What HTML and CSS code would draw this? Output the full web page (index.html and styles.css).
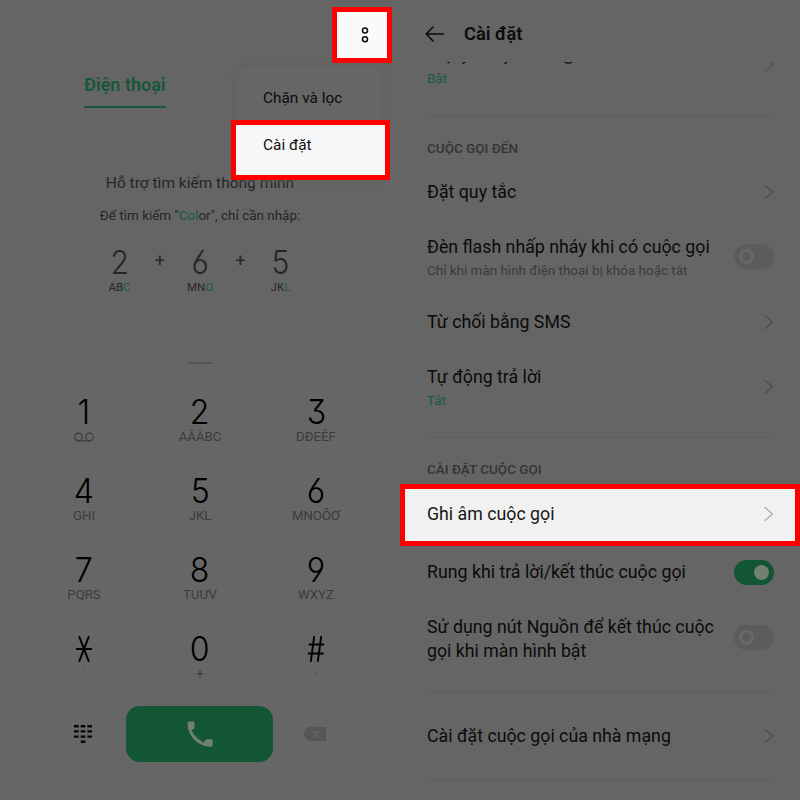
FILE: index.html
```
<!DOCTYPE html>
<html lang="vi">
<head>
<meta charset="utf-8">
<title>Cài đặt cuộc gọi</title>
<link rel="stylesheet" href="styles.css">
</head>
<body>
<main class="screens">
  <section class="phone">
    <header class="tabs"><span class="tab">Điện thoại</span></header>
    <div class="hint">
      <p class="hint-title">Hỗ trợ tìm kiếm thông minh</p>
      <p class="hint-text">Để tìm kiếm "<b>Col</b>or", chỉ cần nhập:</p>
      <div class="combo">
        <div class="combo-key"><span class="num">2</span><span class="abc">AB<b>C</b></span></div>
        <span class="plus">+</span>
        <div class="combo-key"><span class="num">6</span><span class="abc">MN<b>O</b></span></div>
        <span class="plus">+</span>
        <div class="combo-key"><span class="num">5</span><span class="abc">JK<b>L</b></span></div>
      </div>
    </div>
    <div class="dialer">
      <span class="grip"></span>
      <div class="keys">
        <div class="key"><span class="num">1</span><span class="sub"><svg class="voicemail" viewBox="0 0 20 10"><circle cx="4.5" cy="5" r="3.8"/><circle cx="15.5" cy="5" r="3.8"/><path d="M4.5 8.8h11"/></svg></span></div>
        <div class="key"><span class="num">2</span><span class="sub">AĂÂBC</span></div>
        <div class="key"><span class="num">3</span><span class="sub">DĐEÊF</span></div>
        <div class="key"><span class="num">4</span><span class="sub">GHI</span></div>
        <div class="key"><span class="num">5</span><span class="sub">JKL</span></div>
        <div class="key"><span class="num">6</span><span class="sub">MNOÔƠ</span></div>
        <div class="key"><span class="num">7</span><span class="sub">PQRS</span></div>
        <div class="key"><span class="num">8</span><span class="sub">TUƯV</span></div>
        <div class="key"><span class="num">9</span><span class="sub">WXYZ</span></div>
        <div class="key"><span class="num"><svg class="sign" viewBox="0 0 18 26"><path d="M4 1l10 24M14 1L4 25M1 13h16"/></svg></span><span class="sub tiny">'</span></div>
        <div class="key"><span class="num">0</span><span class="sub">+</span></div>
        <div class="key"><span class="num"><svg class="sign" viewBox="0 0 18 26"><path d="M7 1L3.5 25M14.5 1L11 25M2 8.5h15.5M1 17.5h15.5"/></svg></span><span class="sub tiny">;</span></div>
      </div>
      <div class="actions">
        <svg class="pad" viewBox="0 0 20 20"><path d="M1 2.2h4.6M7.7 2.2h4.6M14.4 2.2H19M1 7.4h4.6M7.7 7.4h4.6M14.4 7.4H19M1 12.6h4.6M7.7 12.6h4.6M14.4 12.6H19M7.7 17.8h4.6"/></svg>
        <div class="call"><svg viewBox="0 0 26 26"><path d="M.5 2Q.5.5 2 .5h4Q7.500.5 7.500 2v4.500q0 1.500-1.500 2L4.500 9C7 14.500 11.500 19 17 21.500l1-2q.6-1.200 2-1.200h4q1.700 0 1.700 1.600v4Q25.700 25.700 24 25.700C11 25.700.5 15 .5 2Z"/></svg></div>
        <svg class="erase" viewBox="0 0 24 16"><path class="shape" d="M6 1h17v14H6Q1 12.500 1 8t5-7Z"/><path class="cross" d="M10.500 5.300l5 5.400M15.500 5.300l-5 5.400"/></svg>
      </div>
    </div>
    <div class="more"><svg viewBox="0 0 8 18"><circle cx="4" cy="4.500" r="2.500"/><circle cx="4" cy="13.300" r="2.500"/></svg></div>
    <nav class="menu">
      <div class="menu-item">Chặn và lọc</div>
      <div class="menu-item picked">Cài đặt</div>
    </nav>
  </section>

  <section class="settings">
    <header class="bar">
      <svg class="back" viewBox="0 0 20 16"><path d="M8 1L1.200 8 8 15M1.200 8H18.500"/></svg>
      <h1>Cài đặt</h1>
    </header>
    <div class="row cut">
      <div class="label"><div class="peek"><svg viewBox="0 0 160 3"><path d="M21 .5h1M36 1.500l2-1.500M78 1.500l2-1.500M138 .2q3.500 2 6.500 0"/></svg></div><span class="state">Bật</span></div>
      <svg class="chev" viewBox="0 0 10 16"><path d="M8.500 8L1 14.500M6.500 6L8.500 8"/></svg>
    </div>
    <hr>
    <h2>CUỘC GỌI ĐẾN</h2>
    <div class="row rule"><div class="label">Đặt quy tắc</div><svg class="chev" viewBox="0 0 10 16"><path d="M1 1.500L8.500 8 1 14.500"/></svg></div>
    <div class="row flash"><div class="label">Đèn flash nhấp nháy khi có cuộc gọi<small>Chỉ khi màn hình điện thoại bị khóa hoặc tắt</small></div><span class="switch"></span></div>
    <div class="row sms"><div class="label">Từ chối bằng SMS</div><svg class="chev" viewBox="0 0 10 16"><path d="M1 1.500L8.500 8 1 14.500"/></svg></div>
    <div class="row auto"><div class="label">Tự động trả lời<span class="state">Tắt</span></div><svg class="chev" viewBox="0 0 10 16"><path d="M1 1.500L8.500 8 1 14.500"/></svg></div>
    <hr>
    <h2 class="second">CÀI ĐẶT CUỘC GỌI</h2>
    <div class="row record"><div class="label">Ghi âm cuộc gọi</div><svg class="chev" viewBox="0 0 10 16"><path d="M1 1.500L8.500 8 1 14.500"/></svg></div>
    <div class="row vibrate"><div class="label">Rung khi trả lời/kết thúc cuộc gọi</div><span class="switch on"></span></div>
    <div class="row power"><div class="label">Sử dụng nút Nguồn để kết thúc cuộc<br>gọi khi màn hình bật</div><span class="switch"></span></div>
    <hr>
    <div class="row carrier"><div class="label">Cài đặt cuộc gọi của nhà mạng</div><svg class="chev" viewBox="0 0 10 16"><path d="M1 1.500L8.500 8 1 14.500"/></svg></div>
    <hr>
  </section>
</main>
</body>
</html>
```
FILE: styles.css
```
*, *::before { box-sizing: border-box; margin: 0; padding: 0; }
body { width: 800px; height: 800px; overflow: hidden; background: #656565; color: #0b0b0b; font-family: Roboto, "Noto Sans", sans-serif; }
svg { display: block; fill: none; stroke: currentColor; stroke-linecap: round; stroke-linejoin: round; }
b { font-weight: inherit; color: #185c41; }
.screens { display: flex; height: 800px; }
.phone { position: relative; width: 400px; height: 800px; display: flex; flex-direction: column; }
.settings { width: 400px; height: 800px; display: flex; flex-direction: column; overflow: hidden; }

.tabs { height: 109px; padding: 72px 0 0 84px; }
.tab { display: inline-block; height: 36px; border-bottom: 2px solid #17573a; color: #17573a; font-size: 18px; font-weight: 600; line-height: 26px; white-space: nowrap; }
.hint { height: 246px; padding-top: 62px; text-align: center; color: #262626; }
.hint-title { font-size: 15.500px; line-height: 24px; white-space: nowrap; }
.hint-text { margin-top: 9px; font-size: 13.450px; line-height: 24px; white-space: nowrap; }
.combo { display: flex; justify-content: center; margin-top: 18px; }
.combo-key { width: 60px; display: flex; flex-direction: column; align-items: center; }
.combo .num { font-size: 32px; line-height: 34px; transform: scaleX(.94); }
.combo .abc { font-size: 11.500px; line-height: 14px; }
.plus { width: 20.500px; font-size: 18px; line-height: 30px; }
.num { font-family: Inter, Roboto, sans-serif; font-weight: 300; font-feature-settings: "cv03", "cv04", "cv09"; }

.dialer { height: 445px; display: flex; flex-direction: column; align-items: center; background: #666; border-radius: 16px 16px 0 0; }
.grip { width: 25px; height: 2px; margin-top: 7px; background: #555; border-radius: 1px; }
.keys { display: grid; grid-template-columns: repeat(3, 116px); grid-auto-rows: 79px; margin-top: 29px; }
.key { display: flex; flex-direction: column; align-items: center; }
.key .num { height: 38px; font-size: 34.500px; line-height: 38px; color: #000; transform: scaleX(.93); }
.sub { height: 12px; font-size: 13.200px; line-height: 12px; color: #3b3b3b; }
.tiny { font-size: 8px; line-height: 6px; }
.voicemail { width: 20px; height: 12px; stroke-width: 1.200; }
.sign { width: 18px; height: 26px; margin-top: 6px; stroke-width: 2; }
.actions { display: flex; align-items: center; margin-top: -3px; }
.pad { width: 20px; height: 20px; margin-right: 33px; stroke-width: 2.400; stroke-linecap: butt; color: #050505; }
.call { width: 147px; height: 56px; display: flex; align-items: center; justify-content: center; background: #125635; border-radius: 14px; }
.call svg { width: 26px; height: 26px; fill: #72806f; stroke: none; }
.erase { width: 24px; height: 16px; margin-left: 30px; }
.erase .shape { fill: #555; stroke: none; }
.erase .cross { stroke: #6b6b6b; stroke-width: 1.200; }

.more { position: absolute; left: 332px; top: 7px; width: 60px; height: 56px; display: flex; align-items: center; justify-content: center; padding: 0 0 1px 5px; border: 5px solid #fe0000; background: #fafafa; color: #111; }
.more svg { width: 8px; height: 18px; stroke-width: 1.600; }
.menu { position: absolute; left: 231px; top: 67px; width: 159px; height: 113px; }
.menu::before { content: ""; position: absolute; inset: 0 8px 0 6px; background: #666; border-radius: 10px; box-shadow: 0 0 7px #616161; }
.menu-item { position: relative; height: 53px; padding-left: 32px; font-size: 15.400px; line-height: 62px; white-space: nowrap; }
.picked { height: 60px; padding-left: 27px; line-height: 40px; border: 5px solid #fe0000; background: #f7f7f7; color: #111; }

.bar { display: flex; align-items: center; height: 62px; padding: 6px 0 0 25px; gap: 19px; flex: none; }
.back { width: 20px; height: 16px; stroke-width: 1.600; }
.bar h1 { font-size: 18.300px; font-weight: 600; line-height: 28px; }
.row { flex: none; display: flex; align-items: center; justify-content: space-between; padding: 0 26px 0 27px; font-size: 17.750px; line-height: 24px; white-space: nowrap; }
.chev { width: 10px; height: 16px; color: #4d4d4d; stroke-width: 1.200; }
.state, small { display: block; font-size: 13.450px; line-height: 24px; color: #185c41; }
small { color: #3b3b3b; }
.switch { width: 40px; height: 25px; padding: 5px; border-radius: 13px; background: #5c5c5c; }
.switch::before { content: ""; display: block; width: 15px; height: 15px; border: 3px solid #686868; border-radius: 50%; }
.switch.on { background: #125635; }
.switch.on::before { margin-left: 15px; background: #718071; border: 0; }
hr { flex: none; height: 1px; margin: 0 26px; border: 0; background: #5e5e5e; }
h2 { flex: none; height: 51px; padding: 19px 0 0 27px; font-size: 13.500px; font-weight: 500; line-height: 24px; color: #343434; }
.cut { height: 54px; align-items: flex-start; overflow: hidden; }
.cut .state { margin-top: 2px; }
.peek svg { width: 160px; height: 3px; stroke-width: 1.300; }
.cut .chev { margin-top: -5px; }
.rule { height: 48px; }
.flash { height: 82px; padding-top: 3px; }
.flash .switch, .power .switch { margin-top: -4px; }
.sms { height: 48px; }
.auto { height: 91px; padding-bottom: 5px; }
.auto .chev { margin-top: -5px; }
.second { height: 46px; }
.record { height: 62px; padding: 0 21px 2px 22px; border: 5px solid #fe0000; background: #f1f1f1; color: #161616; }
.record .chev { color: #aaa; }
.vibrate { height: 52px; }
.power { height: 93px; padding-bottom: 11px; }
.carrier { height: 88px; }
```
